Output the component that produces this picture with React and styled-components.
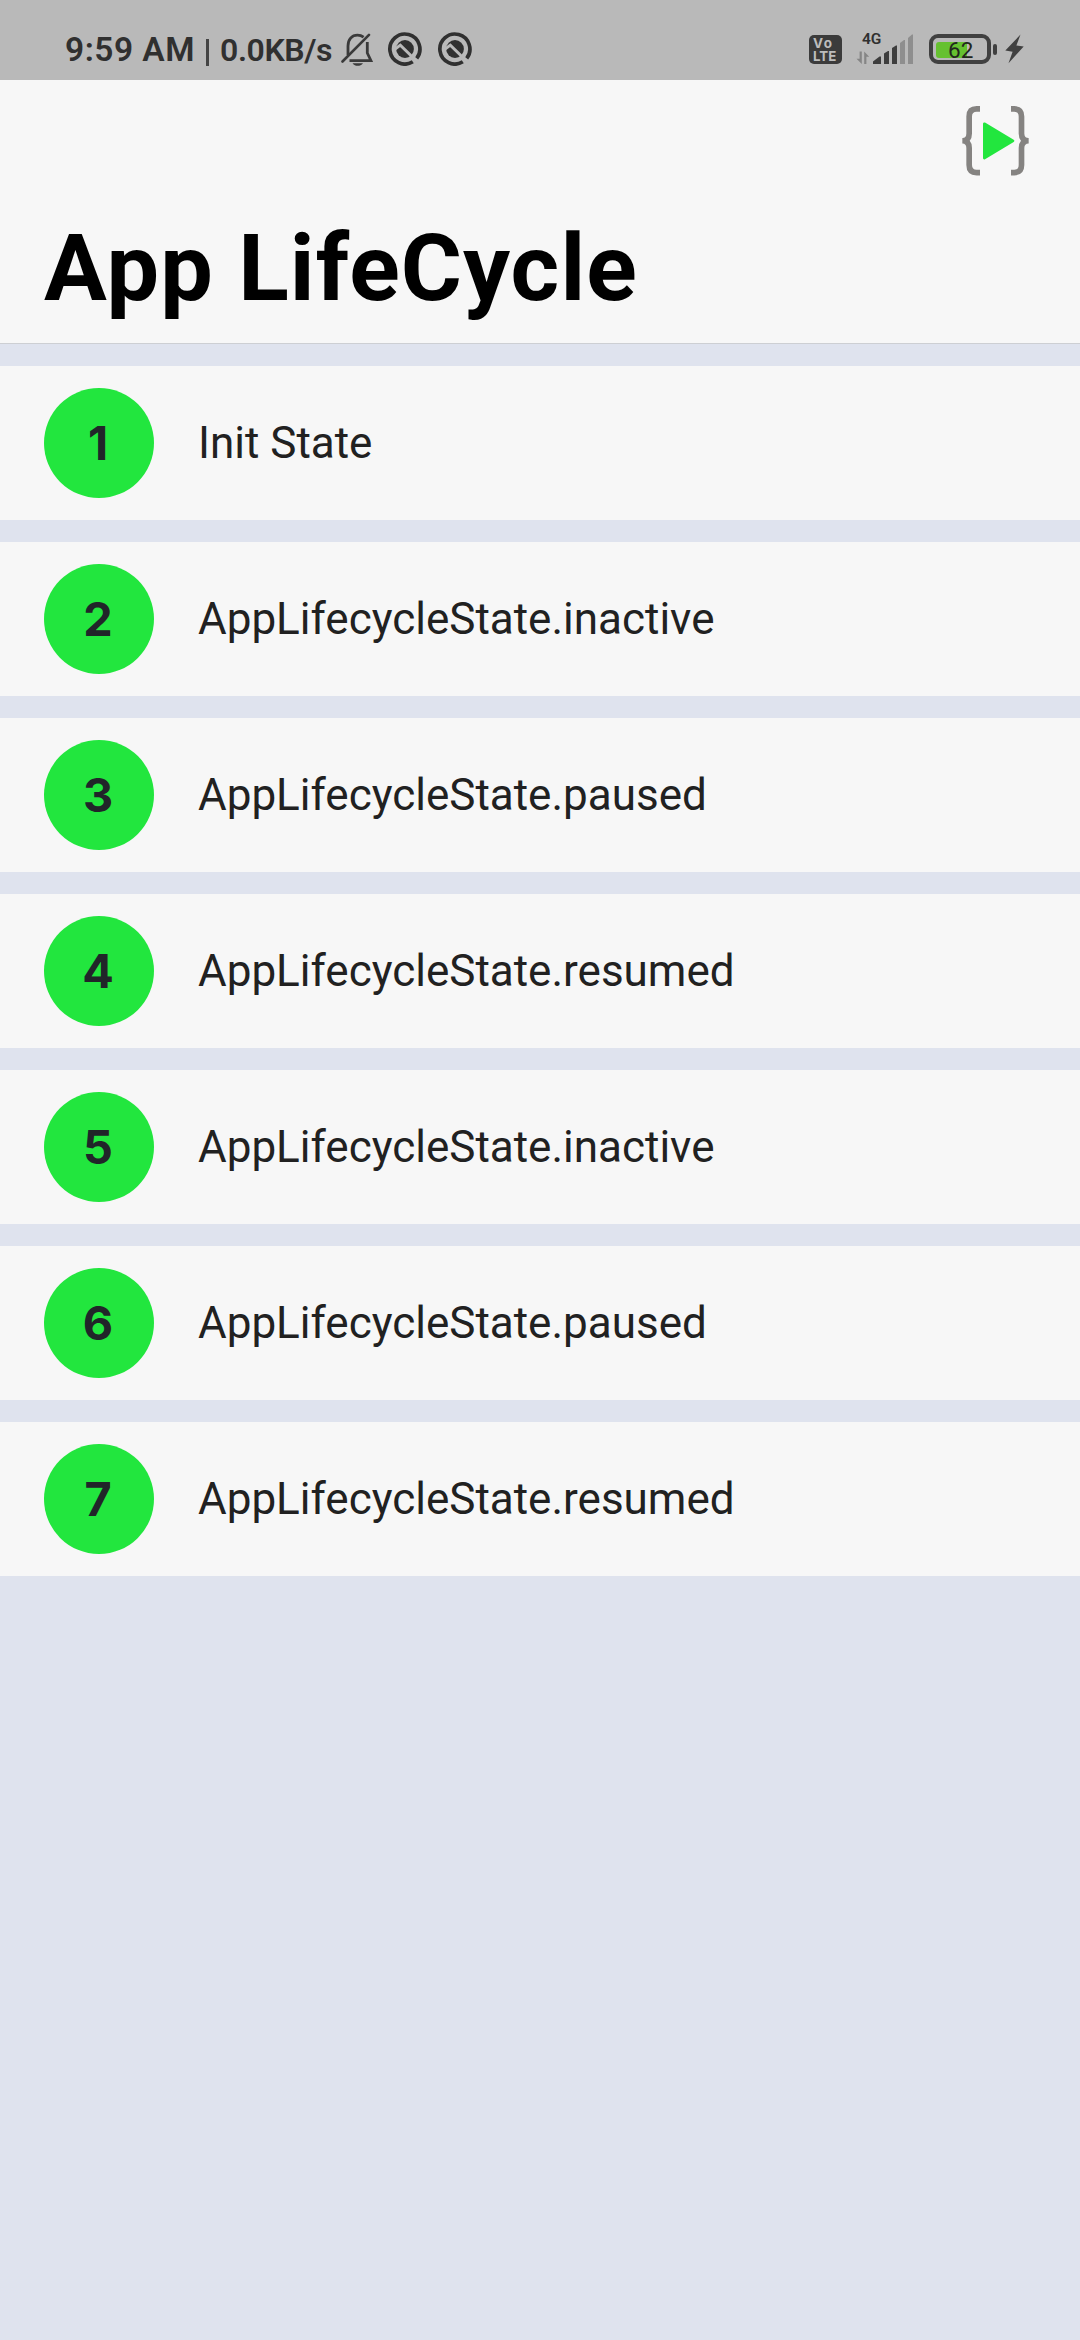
import React from "react";
import styled, { createGlobalStyle } from "styled-components";

const Global = createGlobalStyle`
  *, *::before, *::after { box-sizing: border-box; }
  html, body { margin: 0; background: #dfe3ee; }
  body { font-family: Roboto, "Liberation Sans", sans-serif; }
  svg { display: block; flex: none; }
`;

const Screen = styled.div`
  width: 1080px;
  height: 2340px;
  display: flex;
  flex-direction: column;
  background: #dfe3ee;
  overflow: hidden;
`;

const StatusBar = styled.header`
  height: 80px;
  flex: none;
  display: flex;
  justify-content: space-between;
  padding: 0 56px 0 65px;
  background: #b9b9b9;
  color: #303030;
`;

const StatusGroup = styled.div`
  display: flex;
  align-items: flex-start;
  padding-top: 30px;
`;

const StatusText = styled.span`
  flex: none;
  width: ${(p) => p.$width}px;
  font-size: ${(p) => p.$size}px;
  font-weight: ${(p) => p.$weight || 600};
  letter-spacing: ${(p) => p.$track || 0}px;
  line-height: 40px;
  white-space: nowrap;
`;

const Divider = styled.span`
  width: 3px;
  height: 27px;
  margin: 9px 11px 0 12px;
  background: #444;
`;

const IconSlot = styled.span`
  display: block;
  flex: none;
  margin: ${(p) => p.$top || 0}px 0 0 ${(p) => p.$left || 0}px;
`;

const VolteBadge = styled.span`
  width: 33px;
  height: 29px;
  margin-top: 5px;
  padding: 2px 0 0 4px;
  display: flex;
  flex-direction: column;
  border-radius: 5px;
  background: #3b3b3b;
  color: #bdbdbd;
  font-family: Inter, sans-serif;
  font-weight: 700;
  line-height: 13px;
`;

const VolteLine = styled.span`
  font-size: ${(p) => p.$size}px;
  letter-spacing: ${(p) => p.$track}px;
`;

const Network = styled.div`
  width: 58px;
  margin: 2px 0 0 14px;
  display: flex;
  flex-direction: column;
`;

const NetworkType = styled.span`
  height: 1px;
  padding-left: 6px;
  font-size: 15.5px;
  line-height: 14px;
  font-weight: 600;
`;

const Battery = styled.div`
  width: 62px;
  height: 30px;
  margin: 4px 0 0 15px;
  display: grid;
  align-items: center;
  padding-left: 3px;
  border: 4px solid #404040;
  border-radius: 9px;
`;

const Charge = styled.span`
  grid-area: 1 / 1;
  width: 31px;
  height: 16px;
  border-radius: 3px 0 0 3px;
  background: #66c130;
`;

const ChargeText = styled.span`
  grid-area: 1 / 1;
  padding: 1px 0 0 12px;
  font-size: 22.5px;
  line-height: 22px;
  color: #22261e;
`;

const BatteryTip = styled.span`
  width: 4px;
  height: 11px;
  margin: 14px 0 0 2px;
  border-radius: 2px;
  background: #404040;
`;

const AppBar = styled.div`
  height: 264px;
  flex: none;
  display: flex;
  flex-direction: column;
  background: #f7f7f7;
  border-bottom: 1px solid #cdcfd3;
`;

const Toolbar = styled.div`
  height: 121px;
  display: flex;
  justify-content: flex-end;
  padding: 26px 51px 0 0;
`;

const Title = styled.h1`
  margin: 0;
  padding: 12px 44px 0;
  font-size: 93.5px;
  line-height: 110px;
  font-weight: 700;
  letter-spacing: 1.1px;
  color: #000;
  white-space: nowrap;
`;

const List = styled.ul`
  margin: 22px 0 0;
  padding: 0;
  display: flex;
  flex-direction: column;
  gap: 22px;
  list-style: none;
`;

const Row = styled.li`
  height: 154px;
  display: flex;
  align-items: center;
  gap: 44px;
  padding: 0 44px;
  background: #f7f7f7;
`;

const Badge = styled.span`
  width: 110px;
  height: 110px;
  flex: none;
  display: flex;
  align-items: center;
  justify-content: center;
  padding-right: 2px;
  border-radius: 50%;
  background: #22e63e;
  color: #212529;
  font-family: Inter, sans-serif;
  font-size: 46.75px;
  font-weight: 700;
  line-height: 56px;
`;

const Label = styled.span`
  font-size: 44px;
  line-height: 52px;
  color: #212121;
  white-space: nowrap;
`;

const BellOffIcon = () => (
  <svg width="32" height="33" viewBox="0 0 32 33" fill="none" stroke="#3a3a3a">
    <path d="M7 22V13C7 6.500 10.800 2.200 16.500 2.200C19 2.200 21 3 22.600 4.200" strokeWidth="2.800" />
    <path d="M26.300 9V20L30 27.700H8.500" strokeWidth="2.800" />
    <path d="M1.500 28.500L28 1.800" strokeWidth="2.600" strokeLinecap="round" />
    <path d="M11.500 30.200H22C20.500 32 18.800 32.800 16.700 32.800S13 32 11.500 30.200Z" fill="#3a3a3a" stroke="none" />
  </svg>
);

const RingIcon = () => (
  <svg width="34" height="34" viewBox="0 0 34 34" fill="none">
    <path d="M24.800 29.800A15 15 0 1 1 28.700 26.300" stroke="#303030" strokeWidth="3.700" />
    <circle cx="17" cy="17" r="8.900" fill="#303030" />
    <path d="M6.500 17.500L12.300 13.200L28.500 29" stroke="#b9b9b9" strokeWidth="2.900" />
  </svg>
);

const SignalIcon = () => (
  <svg width="58" height="31" viewBox="0 0 58 31">
    <g fill="#858585">
      <path d="M3.600 18.500H5.800V31L0.500 25.800H3.600Z" />
      <path d="M8.200 18.500L13.200 23.700H10.400V31H8.200Z" />
    </g>
    <g fill="#3d3d3d">
      <path d="M17 31V28.500L23.500 23.500H25V31Z" />
      <path d="M28 31V20.500L32 18H33V31Z" />
      <path d="M36 31V15L40 12.500H41V31Z" />
    </g>
    <g fill="#8e8e8e">
      <path d="M44 31V10L48 7H49V31Z" />
      <path d="M52 31V5L56 1.500H57V31Z" />
    </g>
  </svg>
);

const BoltIcon = () => (
  <svg width="19" height="30" viewBox="0 0 19 30" fill="#404040">
    <path d="M15.500 0.500L0.300 16.500L7.600 17.800L3.500 29.300L18.700 12.600L11.400 11.400Z" />
  </svg>
);

const RunCodeIcon = () => (
  <svg width="67" height="69.500" viewBox="0 0 201 208" fill="none">
    <g stroke="#858381" strokeWidth="17">
      <path d="M54 8.500H44Q21.500 8.500 21.500 31V82Q21.500 104 1 104Q21.500 104 21.500 126V177Q21.500 199.500 44 199.500H54" />
      <path d="M147 8.500H157Q178.500 8.500 178.500 31V82Q178.500 104 200 104Q178.500 104 178.500 126V177Q178.500 199.500 157 199.500H147" />
    </g>
    <path d="M67 53L153 104.500L67 156Z" fill="#22e63e" stroke="#22e63e" strokeWidth="8" strokeLinejoin="round" />
  </svg>
);

const events = [
  "Init State",
  "AppLifecycleState.inactive",
  "AppLifecycleState.paused",
  "AppLifecycleState.resumed",
  "AppLifecycleState.inactive",
  "AppLifecycleState.paused",
  "AppLifecycleState.resumed",
];

export default function App() {
  return (
    <Screen>
      <Global />
      <StatusBar>
        <StatusGroup>
          <StatusText $size={33.5} $width={129} $track={0.5}>9:59 AM</StatusText>
          <Divider />
          <StatusText $size={32} $width={113} $track={-0.4}>0.0KB/s</StatusText>
          <IconSlot $left={8} $top={3}><BellOffIcon /></IconSlot>
          <IconSlot $left={15} $top={2}><RingIcon /></IconSlot>
          <IconSlot $left={16} $top={2}><RingIcon /></IconSlot>
        </StatusGroup>
        <StatusGroup>
          <VolteBadge>
            <VolteLine $size={13.5} $track={1.4}>Vo</VolteLine>
            <VolteLine $size={13.3} $track={0}>LTE</VolteLine>
          </VolteBadge>
          <Network>
            <NetworkType>4G</NetworkType>
            <SignalIcon />
          </Network>
          <Battery>
            <Charge />
            <ChargeText>62</ChargeText>
          </Battery>
          <BatteryTip />
          <IconSlot $left={8} $top={4}><BoltIcon /></IconSlot>
        </StatusGroup>
      </StatusBar>
      <AppBar>
        <Toolbar><RunCodeIcon /></Toolbar>
        <Title>App LifeCycle</Title>
      </AppBar>
      <List>
        {events.map((name, i) => (
          <Row key={i}>
            <Badge>{i + 1}</Badge>
            <Label>{name}</Label>
          </Row>
        ))}
      </List>
    </Screen>
  );
}
